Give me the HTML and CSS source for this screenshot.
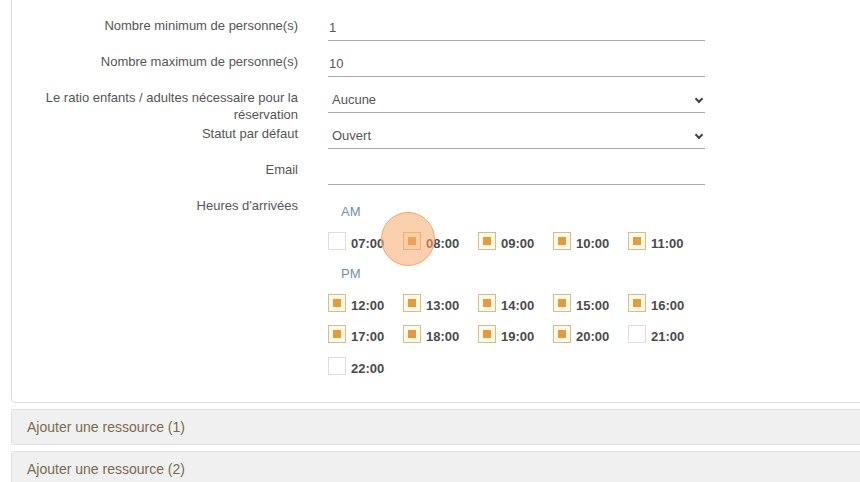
FILE: index.html
```html
<!DOCTYPE html>
<html lang="fr">
<head>
  <meta charset="UTF-8">
  <title>Ressource</title>
  <link rel="stylesheet" href="styles.css">
</head>
<body>
  <div class="page">
    <div class="panel">
      <div class="form-row">
        <label class="form-label">Nombre minimum de personne(s)</label>
        <div class="form-field"><input class="form-input" type="text" value="1"></div>
      </div>
      <div class="form-row">
        <label class="form-label">Nombre maximum de personne(s)</label>
        <div class="form-field"><input class="form-input" type="text" value="10"></div>
      </div>
      <div class="form-row">
        <label class="form-label">Le ratio enfants / adultes nécessaire pour la réservation</label>
        <div class="form-field">
          <div class="form-select">Aucune<span class="chevron"></span></div>
        </div>
      </div>
      <div class="form-row">
        <label class="form-label">Statut par défaut</label>
        <div class="form-field">
          <div class="form-select">Ouvert<span class="chevron"></span></div>
        </div>
      </div>
      <div class="form-row">
        <label class="form-label">Email</label>
        <div class="form-field"><input class="form-input" type="text" value=""></div>
      </div>
      <div class="form-row form-row-hours">
        <label class="form-label">Heures d'arrivées</label>
        <div class="hours">
          <div class="hours-title">AM</div>
          <div class="hours-grid">
            <span class="hour"><i class="check"></i>07:00</span>
            <span class="hour hour-click"><i class="check on"></i>08:00<b class="click"></b></span>
            <span class="hour"><i class="check on"></i>09:00</span>
            <span class="hour"><i class="check on"></i>10:00</span>
            <span class="hour"><i class="check on"></i>11:00</span>
          </div>
          <div class="hours-title">PM</div>
          <div class="hours-grid">
            <span class="hour"><i class="check on"></i>12:00</span>
            <span class="hour"><i class="check on"></i>13:00</span>
            <span class="hour"><i class="check on"></i>14:00</span>
            <span class="hour"><i class="check on"></i>15:00</span>
            <span class="hour"><i class="check on"></i>16:00</span>
            <span class="hour"><i class="check on"></i>17:00</span>
            <span class="hour"><i class="check on"></i>18:00</span>
            <span class="hour"><i class="check on"></i>19:00</span>
            <span class="hour"><i class="check on"></i>20:00</span>
            <span class="hour"><i class="check"></i>21:00</span>
            <span class="hour"><i class="check"></i>22:00</span>
          </div>
        </div>
      </div>
    </div>

    <div class="accordion-head">Ajouter une ressource (1)</div>
    <div class="accordion-head">Ajouter une ressource (2)</div>
  </div>
</body>
</html>
```

FILE: styles.css
```css
body {
  margin: 0;
  padding: 0;
  overflow: hidden;
  background: #fff;
  font-family: "Liberation Sans", Arial, sans-serif;
  font-size: 13px;
  color: #555;
}

.page {
  width: 900px;
  margin: -20px 0 0 11px;
}

.panel {
  border: 1px solid #ddd;
  border-radius: 0 0 4px 4px;
  padding: 24px 0 12px 16px;
}

.form-row {
  display: flex;
  height: 36px;
}

.form-label {
  width: 270px;
  flex: none;
  text-align: right;
  padding-top: 12px;
  line-height: 17px;
  color: #555;
}

.form-field {
  width: 377px;
  margin-left: 30px;
}

.form-input,
.form-select {
  display: block;
  box-sizing: border-box;
  width: 100%;
  height: 36px;
  padding: 14px 0 4px 1px;
  line-height: 17px;
  border: none;
  border-bottom: 1px solid #a8a8a8;
  font-family: "Liberation Sans", Arial, sans-serif;
  font-size: 13px;
  color: #555;
  outline: none;
  background: transparent;
}

.form-select {
  position: relative;
  padding-left: 4px;
}

.chevron {
  position: absolute;
  right: 3px;
  top: 19px;
  width: 4px;
  height: 4px;
  border-right: 2px solid #444;
  border-bottom: 2px solid #444;
  transform: rotate(45deg);
}

.form-row-hours {
  height: auto;
}

.hours {
  margin-left: 30px;
  padding-top: 19px;
}

.hours-title {
  color: #6f93aa;
  padding-left: 13px;
  line-height: 16px;
  margin-bottom: 15px;
}

.hours-grid {
  display: grid;
  grid-template-columns: repeat(5, 75px);
  grid-auto-rows: 31.5px;
  margin-bottom: -1px;
}

.hour {
  position: relative;
  display: flex;
  align-items: flex-start;
  font-weight: bold;
  font-size: 13px;
  color: #4a4a4a;
  line-height: 17px;
}

.hour .check {
  position: relative;
  top: -3px;
  flex: none;
  box-sizing: border-box;
  width: 18px;
  height: 18px;
  margin-right: 5px;
  border: 1px solid #ddd;
  background: #fff;
}

.hour .check.on {
  border-color: #d5bd88;
  background: #fff9ea;
}

.hour .check.on::after {
  content: "";
  position: absolute;
  left: 4px;
  top: 4px;
  width: 8px;
  height: 8px;
  background: #e69a3c;
}

.click {
  position: absolute;
  left: -22px;
  top: -23px;
  width: 54px;
  height: 54px;
  box-sizing: border-box;
  border-radius: 50%;
  border: 1px solid #eaa870;
  background: rgba(248, 170, 110, 0.55);
}

.accordion-head {
  margin-top: 6px;
  height: 34px;
  line-height: 34px;
  padding-left: 15px;
  background: #f0f0f0;
  border: 1px solid #e0e0e0;
  border-radius: 3px;
  color: #7a6a50;
  font-size: 14px;
}
```
